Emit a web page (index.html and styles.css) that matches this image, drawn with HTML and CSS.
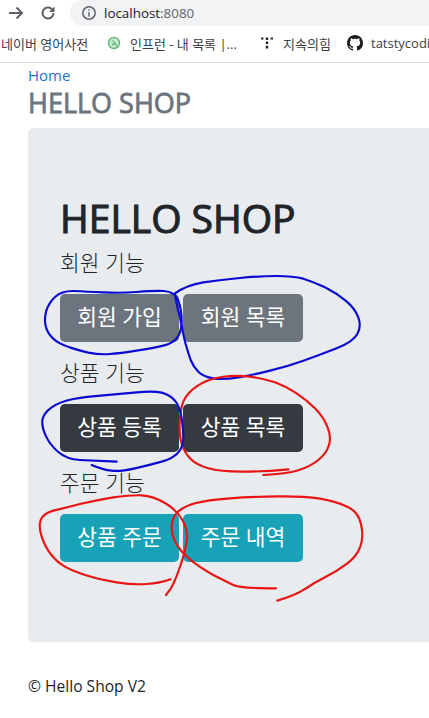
FILE: index.html
```html
<!DOCTYPE html>
<html lang="ko">
<head>
<meta charset="utf-8">
<title>HELLO SHOP</title>
<link rel="stylesheet" href="styles.css">
</head>
<body>
<header class="browser">
  <div class="toolbar">
    <svg class="tool-icon arrow" viewBox="0 0 16 16"><path d="M1 8H14M8.5 2.5L14 8L8.5 13.5"/></svg>
    <svg class="tool-icon reload" viewBox="0 0 16 16"><path d="M13.5 8A5.5 5.5 0 1 1 11.8 4L13.6 5.8"/><path class="fill" d="M14.5 1.5V7H9Z"/></svg>
    <div class="omnibox">
      <svg class="info" viewBox="0 0 16 16"><circle cx="8" cy="8" r="6.2"/><path d="M8 7.2V11.6M8 4.4V5.8"/></svg>
      <span class="host">localhost</span><span class="port">:8080</span>
    </div>
  </div>
  <nav class="bookmarks">
    <span class="mark first">네이버 영어사전</span>
    <span class="mark second">
      <svg class="mark-icon" viewBox="0 0 14 14"><circle class="leaf" cx="7" cy="7" r="5.5"/><path class="leaf-line" d="M5.5 4.5L8 7.5L10.5 10.5M8 7.5L5 9"/></svg>
      인프런 - 내 목록 |...
    </span>
    <span class="mark third">
      <svg class="mark-icon" viewBox="0 0 14 14"><path class="dots" d="M1 1.5H3.4V3.4H1ZM5.8 1.5H8.2V3.9H5.8ZM10.6 1.5H13V3.4H10.6ZM5.8 5.5H8.2V8H5.8ZM5.8 9.8H8.2V12.4H5.8Z"/></svg>
      지속의힘
    </span>
    <span class="mark fourth">
      <svg class="mark-icon github" viewBox="0 0 16 16"><path d="M8 0C3.58 0 0 3.58 0 8c0 3.54 2.29 6.53 5.47 7.59.4.07.55-.17.55-.38 0-.19-.01-.82-.01-1.49-2.01.37-2.53-.49-2.69-.94-.09-.23-.48-.94-.82-1.13-.28-.15-.68-.52-.01-.53.63-.01 1.08.58 1.23.82.72 1.21 1.87.87 2.33.66.07-.52.28-.87.51-1.07-1.78-.2-3.64-.89-3.64-3.95 0-.87.31-1.59.82-2.15-.08-.2-.36-1.02.08-2.12 0 0 .67-.21 2.2.82.64-.18 1.32-.27 2-.27s1.36.09 2 .27c1.53-1.04 2.2-.82 2.2-.82.44 1.1.16 1.92.08 2.12.51.56.82 1.27.82 2.15 0 3.07-1.87 3.75-3.65 3.95.29.25.54.73.54 1.48 0 1.07-.01 1.93-.01 2.2 0 .21.15.46.55.38A8.01 8.01 0 0 0 16 8c0-4.42-3.58-8-8-8z"/></svg>
      tatstycoding
    </span>
  </nav>
</header>

<main class="page">
  <a class="home" href="#">Home</a>
  <h3 class="brand">HELLO SHOP</h3>
  <section class="jumbotron">
    <h1 class="title">HELLO SHOP</h1>
    <p class="label">회원 기능</p>
    <div class="actions">
      <a class="btn secondary" href="#">회원 가입</a>
      <a class="btn secondary" href="#">회원 목록</a>
    </div>
    <p class="label">상품 기능</p>
    <div class="actions">
      <a class="btn dark" href="#">상품 등록</a>
      <a class="btn dark" href="#">상품 목록</a>
    </div>
    <p class="label">주문 기능</p>
    <div class="actions">
      <a class="btn info-btn" href="#">상품 주문</a>
      <a class="btn info-btn" href="#">주문 내역</a>
    </div>
  </section>
  <footer class="footer">© Hello Shop V2</footer>
</main>

<svg class="scribbles" viewBox="0 0 429 718">
  <g transform="translate(20 260) scale(.3333)">
    <path class="ink blue" d="M205 278Q130 260 107 242Q85 225 78 202Q72 180 78 155Q85 130 105 111Q125 92 162 93Q200 95 250 97Q300 100 350 96Q400 92 432 93Q465 95 475 122Q485 150 485 182Q485 215 472 232Q460 250 430 257Q400 265 350 272Q300 280 270 282Q240 285 205 278"/>
    <path class="ink blue" d="M465 100Q500 75 550 67Q600 60 660 54Q720 48 770 48Q820 48 850 56Q880 65 915 82Q950 100 977 122Q1005 145 1015 172Q1025 200 1012 222Q1000 245 950 265Q900 285 850 302Q800 320 750 332Q700 345 655 352Q610 360 580 355Q550 350 535 335Q520 320 512 300Q505 280 497 252Q490 225 485 197Q480 170 472 140Q465 110 465 100"/>
  </g>
  <g transform="translate(20 370) scale(.3333)">
    <path class="ink red" d="M805 298Q730 305 665 305Q600 305 565 295Q530 285 512 267Q495 250 486 225Q478 200 479 160Q480 120 490 95Q500 70 530 49Q560 28 605 21Q650 15 690 20Q730 25 765 37Q800 50 830 70Q860 90 885 115Q910 140 922 170Q935 200 927 225Q920 250 895 270Q870 290 835 301Q800 312 730 315"/>
    <path class="ink blue" d="M290 275Q220 272 180 270Q140 268 115 246Q90 225 77 197Q65 170 67 150Q70 130 95 112Q120 95 160 87Q200 80 250 76Q300 72 350 67Q400 62 425 68Q450 75 465 92Q480 110 485 145Q490 180 490 205Q490 230 475 247Q460 265 425 275Q390 285 345 295Q300 305 275 302Q250 300 215 285"/>
  </g>
  <g transform="translate(20 480) scale(.3333)">
    <path class="ink red" d="M452 298Q420 310 380 312Q340 315 290 307Q240 300 195 285Q150 270 130 257Q110 245 92 222Q75 200 65 170Q55 140 62 120Q70 100 100 92Q130 85 180 72Q230 60 280 52Q330 45 365 46Q400 48 435 69Q470 90 487 120Q505 150 500 185Q495 220 482 255Q470 290 462 307Q455 325 438 345"/>
    <path class="ink red" d="M768 325Q660 325 640 315Q620 305 590 290Q560 275 525 250Q490 225 472 197Q455 170 455 142Q455 115 472 97Q490 80 525 70Q560 60 630 55Q700 50 775 49Q850 48 900 56Q950 65 982 80Q1015 95 1023 132Q1032 170 1021 200Q1010 230 980 252Q950 275 915 292Q880 310 855 327Q830 345 772 362"/>
  </g>
</svg>
</body>
</html>
```
FILE: styles.css
```css
* { box-sizing: border-box; }
html, body { margin: 0; height: 718px; overflow: hidden; background: #fff; }
body {
  position: relative;
  font-family: "Open Sans", "Noto Sans CJK KR", sans-serif;
  color: #212529;
}
.browser { height: 63px; border-bottom: 1px solid #dadce0; }
.toolbar { height: 26px; display: flex; align-items: center; }
.tool-icon { width: 16px; height: 16px; fill: none; stroke: #5f6368; stroke-width: 2; }
.tool-icon .fill { fill: #5f6368; stroke: none; }
.arrow { margin-left: 8px; }
.reload { margin-left: 16px; }
.omnibox {
  flex: 1;
  height: 26px;
  margin-left: 14px;
  padding-left: 11px;
  display: flex;
  align-items: center;
  background: #f1f3f4;
  border-radius: 13px 0 0 13px;
  font-size: 13.4px;
  color: #202124;
}
.info { width: 16px; height: 16px; margin-right: 7px; fill: none; stroke: #5f6368; stroke-width: 1.5; }
.port { color: #5f6368; }
.bookmarks {
  height: 34px;
  display: flex;
  align-items: center;
  font-size: 13px;
  color: #3c4043;
  white-space: nowrap;
  overflow: hidden;
}
.mark { display: flex; align-items: center; flex: none; }
.mark-icon { width: 14px; height: 14px; margin-right: 9px; flex: none; }
.first { margin-left: 1px; width: 86px; }
.second { margin-left: 20px; width: 129px; }
.third { margin-left: 24px; width: 70px; }
.fourth { margin-left: 17px; }
.leaf { fill: #c8e8cf; stroke: #5fb878; stroke-width: 1.4; }
.leaf-line { fill: none; stroke: #4ba868; stroke-width: 1.1; }
.dots { fill: #222; }
.github { width: 16px; height: 16px; margin-right: 8px; fill: #1b1f23; }

.page { padding-left: 28px; }
.home { display: block; height: 24px; font-size: 15px; line-height: 25px; color: #1a73c8; text-decoration: none; }
.brand {
  margin: 0 0 9px;
  height: 32px;
  font-size: 27px;
  line-height: 32px;
  font-weight: 400;
  -webkit-text-stroke: 0.8px currentColor;
  color: #6c757d;
}
.jumbotron {
  height: 514px;
  padding: 64px 32px 0;
  background: #e9ecef;
  border-radius: 5px 0 0 5px;
}
.title {
  margin: 0 0 4px;
  height: 52px;
  font-size: 39px;
  line-height: 52px;
  font-weight: 400;
  -webkit-text-stroke: 1.1px currentColor;
}
.label { margin: 0; height: 30px; font-size: 21.5px; line-height: 30px; font-weight: 300; white-space: nowrap; }
.actions { display: flex; gap: 4px; margin: 16px 0; }
.btn {
  width: 119px;
  height: 48px;
  border-radius: 5px;
  color: #fff;
  font-size: 21.5px;
  line-height: 46px;
  text-align: center;
  text-decoration: none;
  white-space: nowrap;
}
.btn + .btn { width: 120px; }
.secondary { background: #6c757d; }
.dark { background: #343a40; }
.info-btn { background: #17a2b8; }
.footer { margin-top: 34px; font-size: 15.6px; line-height: 20px; color: #212529; }

.scribbles { position: absolute; left: 0; top: 0; width: 429px; height: 718px; pointer-events: none; }
.ink { fill: none; stroke-width: 6.5; stroke-linecap: round; stroke-linejoin: round; }
.blue { stroke: #0a0ad2; }
.red { stroke: #ea1414; }
```
